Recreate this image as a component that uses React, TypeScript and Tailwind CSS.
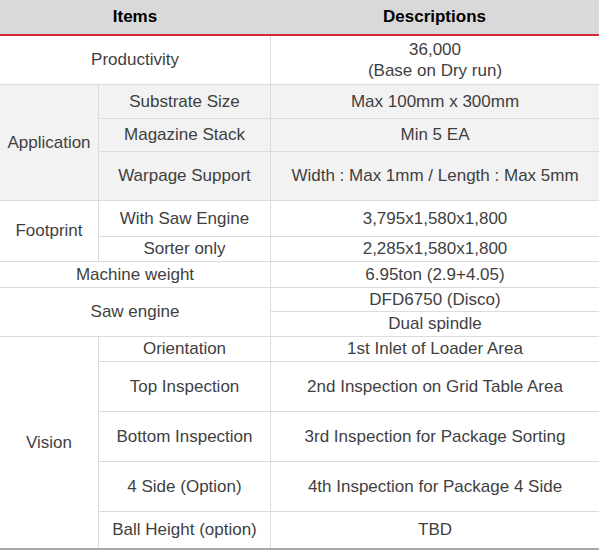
const cell = 'flex items-center justify-center text-center'

function Cell({ className = '', children }: { className?: string; children: React.ReactNode }) {
  return <div className={`${cell} ${className}`}>{children}</div>
}

export default function App() {
  return (
    <div className="w-[599px] bg-white font-['Liberation_Sans',Arial,sans-serif] text-[17px] text-[#3f3f3f]">
      <div className="grid grid-cols-[270px_1fr] h-[36px] bg-[#d9d9d9] border-b-2 border-[#d42a36] font-bold text-black">
        <div className={cell}>Items</div>
        <div className={cell}>Descriptions</div>
      </div>

      <div className="grid grid-cols-[98px_171px_328px] grid-rows-[48px_33px_32px_48px_35px_24px_25px_23px_24px_24px_49px_49px_49px_36px] gap-px bg-[#dcdcdc] border-b-2 border-[#a8a8a8]">
        <Cell className="col-span-2 bg-white">Productivity</Cell>
        <Cell className="bg-white flex-col leading-[21px]">
          <span>36,000</span>
          <span>(Base on Dry run)</span>
        </Cell>

        <Cell className="row-span-3 bg-[#f2f2f2]">Application</Cell>
        <Cell className="bg-[#f2f2f2]">Substrate Size</Cell>
        <Cell className="bg-[#f2f2f2]">Max 100mm x 300mm</Cell>
        <Cell className="bg-[#f2f2f2]">Magazine Stack</Cell>
        <Cell className="bg-[#f2f2f2]">Min 5 EA</Cell>
        <Cell className="bg-[#f2f2f2]">Warpage Support</Cell>
        <Cell className="bg-[#f2f2f2]">Width : Max 1mm / Length : Max 5mm</Cell>

        <Cell className="row-span-2 bg-white">Footprint</Cell>
        <Cell className="bg-white">With Saw Engine</Cell>
        <Cell className="bg-white">3,795x1,580x1,800</Cell>
        <Cell className="bg-white">Sorter only</Cell>
        <Cell className="bg-white">2,285x1,580x1,800</Cell>

        <Cell className="col-span-2 bg-white">Machine weight</Cell>
        <Cell className="bg-white">6.95ton (2.9+4.05)</Cell>

        <Cell className="col-span-2 row-span-2 bg-white">Saw engine</Cell>
        <Cell className="bg-white">DFD6750 (Disco)</Cell>
        <Cell className="bg-white">Dual spindle</Cell>

        <Cell className="row-span-5 bg-white">Vision</Cell>
        <Cell className="bg-white">Orientation</Cell>
        <Cell className="bg-white">1st Inlet of Loader Area</Cell>
        <Cell className="bg-white">Top Inspection</Cell>
        <Cell className="bg-white">2nd Inspection on Grid Table Area</Cell>
        <Cell className="bg-white">Bottom Inspection</Cell>
        <Cell className="bg-white">3rd Inspection for Package Sorting</Cell>
        <Cell className="bg-white">4 Side (Option)</Cell>
        <Cell className="bg-white">4th Inspection for Package 4 Side</Cell>
        <Cell className="bg-white">Ball Height (option)</Cell>
        <Cell className="bg-white">TBD</Cell>
      </div>
    </div>
  )
}
